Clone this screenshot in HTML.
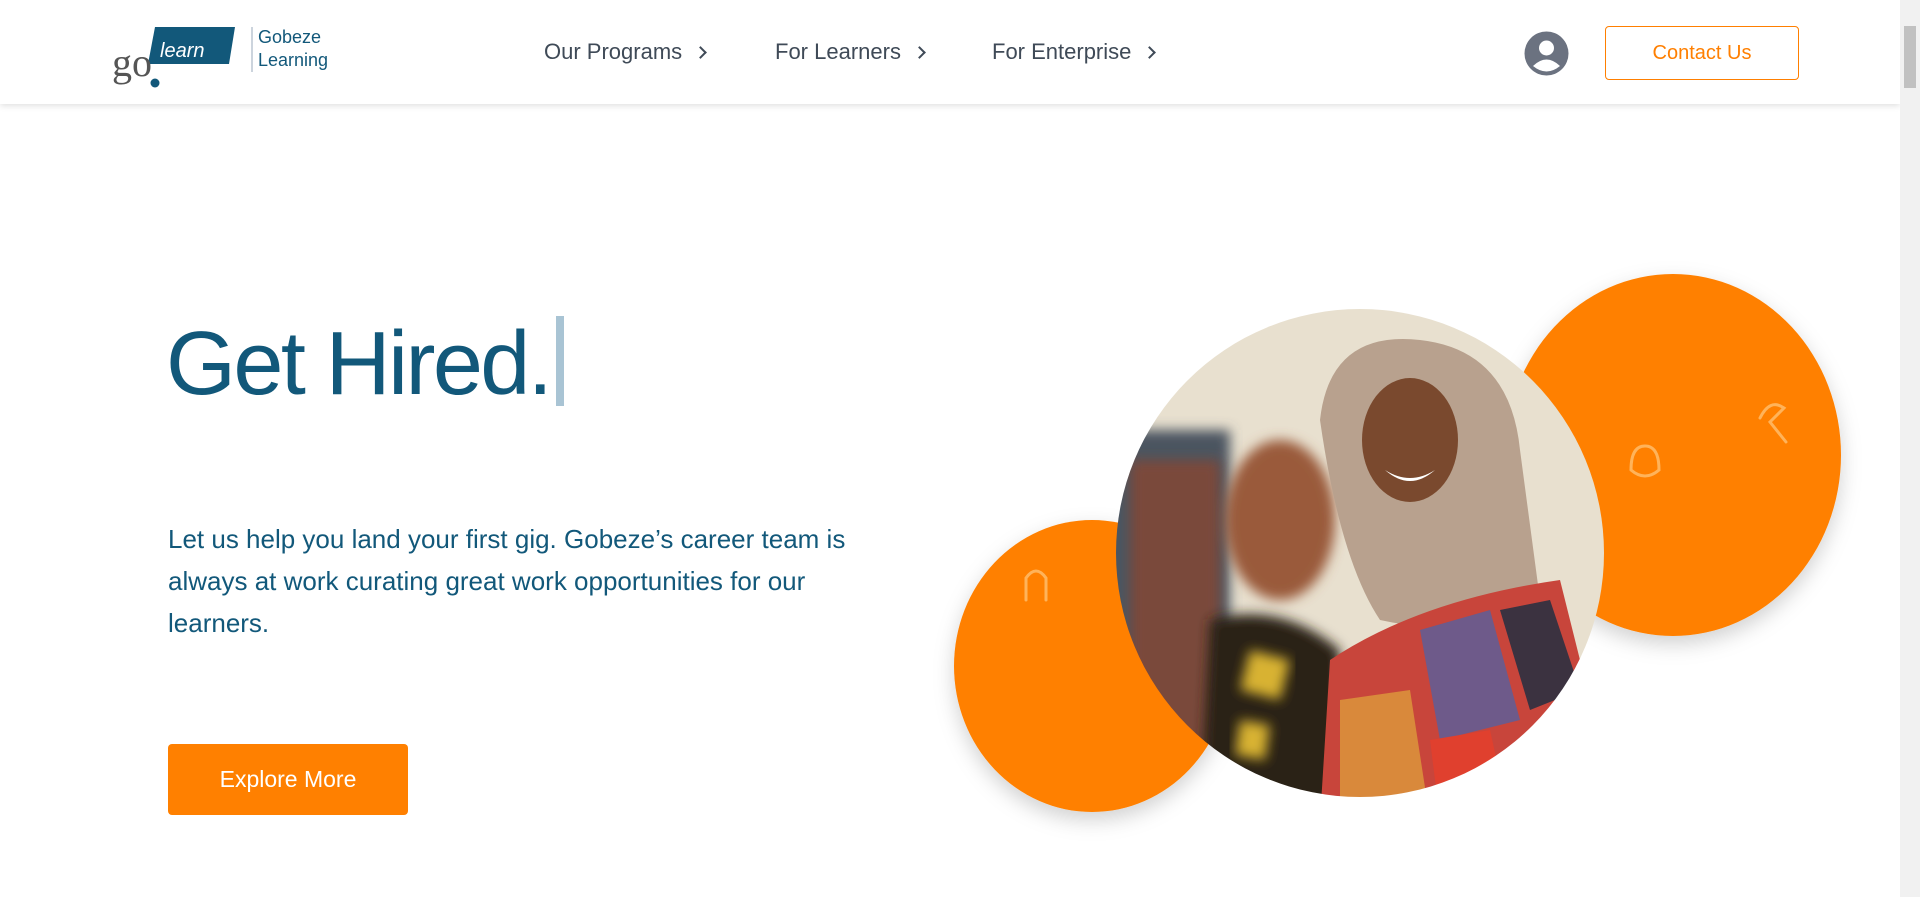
<!DOCTYPE html>
<html><head><meta charset="utf-8"><style>
*{margin:0;padding:0;box-sizing:border-box}
body{width:1920px;height:897px;overflow:hidden;background:#fff;font-family:"Liberation Sans",sans-serif;position:relative}
.nav{position:absolute;left:0;top:0;width:1900px;height:104px;background:#fff;box-shadow:0 2px 6px rgba(0,0,0,.12);z-index:5}
.nav a{position:absolute;top:39px;font-size:22px;color:#3f4a57;text-decoration:none}
.nav a span{display:inline-block;width:9px;height:9px;border-right:2px solid #3f4a57;border-top:2px solid #3f4a57;transform:rotate(45deg);margin-left:14px;position:relative;top:-2px}
.contact{position:absolute;left:1605px;top:26px;width:194px;height:54px;border:1px solid #ff7f00;border-radius:4px;color:#ff7f00;font-size:20px;text-align:center;line-height:52px}
.scroll{position:absolute;right:0;top:0;width:20px;height:897px;background:#f1f1f1;z-index:6}
.scroll div{position:absolute;left:4px;top:26px;width:12px;height:62px;background:#c1c1c1}
h1{position:absolute;left:166px;top:314px;font-size:90px;line-height:100px;font-weight:normal;color:#12587a;letter-spacing:-2.6px;white-space:nowrap}
.cur{display:inline-block;width:8px;height:90px;background:#a9c4d4;vertical-align:-12px;margin-left:6px}
p{position:absolute;left:168px;top:518px;width:700px;font-size:26px;line-height:42px;color:#12587a}
.btn{position:absolute;left:168px;top:744px;width:240px;height:71px;background:#ff8000;border-radius:4px;color:#fff;font-size:23px;text-align:center;line-height:71px}
</style></head><body>
<div class="nav">
<svg style="position:absolute;left:110px;top:24px" width="225" height="64" viewBox="0 0 225 64">
<polygon points="45,3 125,3 119,40 38,40" fill="#12587a"/>
<text x="50" y="33" font-family="Liberation Sans" font-style="italic" font-size="20" fill="#fff">learn</text>
<text x="2" y="52" font-family="Liberation Serif" font-size="40" fill="#555">go</text>
<circle cx="45" cy="59" r="4.5" fill="#12587a"/>
<line x1="142" y1="3" x2="142" y2="48" stroke="#9ab" stroke-width="1"/>
<text x="148" y="19" font-size="18" fill="#12587a">Gobeze</text>
<text x="148" y="42" font-size="18" fill="#12587a">Learning</text>
</svg>
<a style="left:544px">Our Programs<span></span></a>
<a style="left:775px">For Learners<span></span></a>
<a style="left:992px">For Enterprise<span></span></a>
<svg style="position:absolute;left:1524px;top:31px" width="45" height="45" viewBox="0 0 45 45"><circle cx="22.5" cy="22.5" r="22" fill="#6b7280"/><circle cx="22.5" cy="17" r="7.5" fill="#fff"/><path d="M9 35 Q22.5 22 36 35 Q22.5 46 9 35Z" fill="#fff"/></svg>
<div class="contact">Contact Us</div>
</div>
<div class="scroll"><div></div></div>
<h1>Get Hired.<span class="cur"></span></h1>
<p>Let us help you land your first gig. Gobeze’s career team is always at work curating great work opportunities for our learners.</p>
<div class="btn">Explore More</div>
<svg style="position:absolute;left:900px;top:240px" width="1000" height="620" viewBox="900 240 1000 620">
<defs>
<filter id="sh" x="-20%" y="-20%" width="140%" height="140%"><feDropShadow dx="0" dy="8" stdDeviation="10" flood-opacity=".18"/></filter>
<clipPath id="c"><circle cx="1360" cy="553" r="244"/></clipPath>
<filter id="bl"><feGaussianBlur stdDeviation="6"/></filter>
</defs>
<ellipse cx="1673" cy="455" rx="168" ry="181" fill="#ff8000" filter="url(#sh)"/>
<ellipse cx="1092" cy="666" rx="138" ry="146" fill="#ff8000" filter="url(#sh)"/>
<g fill="none" stroke="#ffb35a" stroke-width="3" stroke-linecap="round">
<path d="M1026 600 v-22 q10-14 20 0 v22"/><path d="M1631 470 q0-24 14-24 q14 0 14 24 q-14 12 -28 0"/><path d="M1760 418 q10-20 24-10 l-14 14 l16 20"/>
</g>
<g clip-path="url(#c)" filter="url(#sh)">
<rect x="1100" y="300" width="520" height="520" fill="#e8e0cf"/>
<rect x="1100" y="430" width="130" height="360" fill="#4b5560" filter="url(#bl)"/>
<rect x="1130" y="460" width="90" height="300" fill="#7a4a3a" filter="url(#bl)"/>
<ellipse cx="1280" cy="520" rx="55" ry="80" fill="#9a5a3a" filter="url(#bl)"/>
<path d="M1210 620 Q1280 600 1340 650 L1340 820 L1200 820Z" fill="#2a2418" filter="url(#bl)"/>
<path d="M1250 650 l40 10 l-10 40 l-40-10z M1240 720 l30 5 l-5 35 l-30-5z" fill="#d8b230" filter="url(#bl)"/>
<path d="M1320 420 Q1330 330 1420 340 Q1510 350 1520 450 L1540 600 Q1470 640 1380 620 Q1340 560 1320 420Z" fill="#b8a18e"/>
<ellipse cx="1410" cy="440" rx="48" ry="62" fill="#7a4a2e"/>
<path d="M1385 470 q25 16 50 0 q-25 22 -50 0z" fill="#fff"/>
<path d="M1330 660 Q1420 600 1560 580 L1620 820 L1320 820Z" fill="#c8453a"/>
<path d="M1420 630 l70 -20 l30 110 l-80 20z" fill="#6e5a8a"/>
<path d="M1500 610 l50 -10 l30 90 l-50 20z" fill="#3a3040"/>
<path d="M1340 700 l70 -10 l20 130 l-90 0z" fill="#d9893a"/>
<path d="M1430 740 l60 -10 l20 90 l-70 0z" fill="#e0402e"/>
</g>
</svg>
</body></html>
